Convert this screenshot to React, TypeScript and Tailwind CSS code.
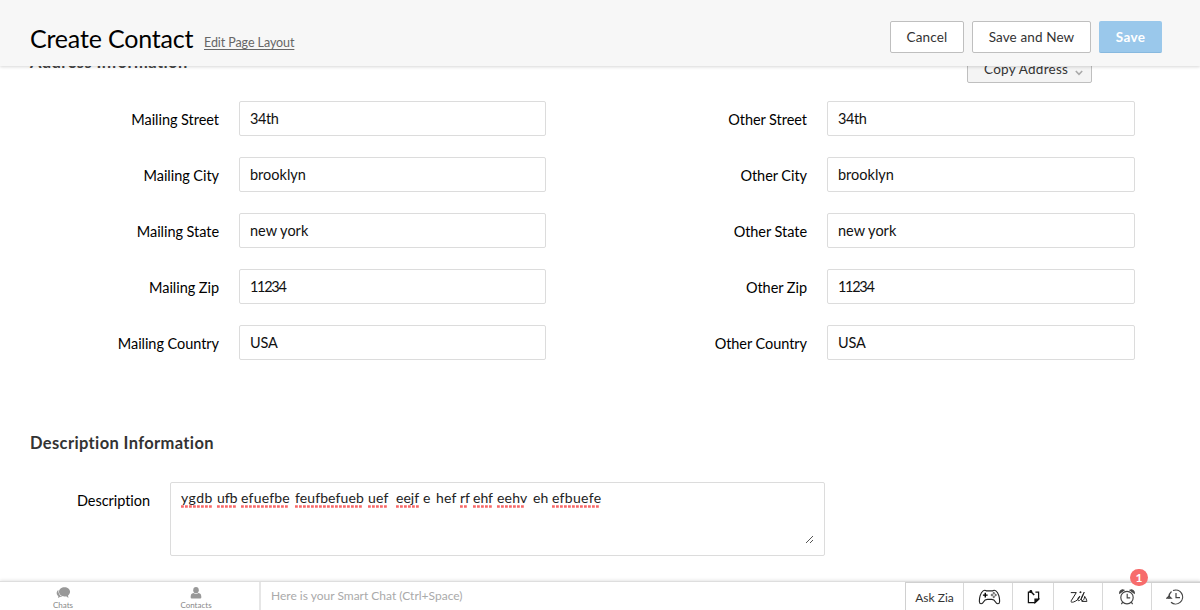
import React from "react";

type FieldProps = { label: string; value: string; spacing: string };

const leftFields: FieldProps[] = [
  { label: "Mailing Street", value: "34th", spacing: "tracking-[-0.4px]" },
  { label: "Mailing City", value: "brooklyn", spacing: "tracking-[0px]" },
  { label: "Mailing State", value: "new york", spacing: "tracking-[0px]" },
  { label: "Mailing Zip", value: "11234", spacing: "tracking-[-1.3px]" },
  { label: "Mailing Country", value: "USA", spacing: "tracking-[-0.2px]" },
];

const rightFields: FieldProps[] = leftFields.map((f) => ({
  ...f,
  label: f.label.replace("Mailing", "Other"),
}));

const words: { text: string; width: string; marked: boolean; line: string }[] = [
  { text: "ygdb", width: "w-[36px] tracking-[0.5px]", marked: true, line: "w-[32px]" },
  { text: "ufb", width: "w-[24px]", marked: true, line: "w-[20px]" },
  { text: "efuefbe", width: "w-[54px] tracking-[0.2px]", marked: true, line: "w-[48px]" },
  { text: "feufbefueb", width: "w-[73px] tracking-[0.1px]", marked: true, line: "w-[68px]" },
  { text: "uef", width: "w-[28px] tracking-[0.2px]", marked: true, line: "w-[20px]" },
  { text: "eejf", width: "w-[27px]", marked: true, line: "w-[24px]" },
  { text: "e", width: "w-[13px]", marked: false, line: "" },
  { text: "hef", width: "w-[24px] tracking-[0.2px]", marked: false, line: "" },
  { text: "rf", width: "w-[13px]", marked: true, line: "w-[8px]" },
  { text: "ehf", width: "w-[24px]", marked: true, line: "w-[20px]" },
  { text: "eehv", width: "w-[36px] tracking-[0.2px]", marked: true, line: "w-[28px]" },
  { text: "eh", width: "w-[19px]", marked: false, line: "" },
  { text: "efbuefe", width: "w-[52px] tracking-[0.3px]", marked: true, line: "w-[48px]" },
];

function Field({ label, value, spacing }: FieldProps) {
  return (
    <div className="flex h-[35px] items-center">
      <label className="w-[189px] pt-[2px] text-right text-[14.5px] leading-5 tracking-[-0.05px] text-black">{label}</label>
      <div className="ml-5 flex h-[35px] flex-1 items-center rounded-[2px] border border-[#dcdcdc] bg-white pl-[10px] pt-px">
        <span className={`text-[14.5px] leading-5 text-[#111] ${spacing}`}>{value}</span>
      </div>
    </div>
  );
}

function Squiggle({ width }: { width: string }) {
  return (
    <svg className={`absolute left-0 top-[17px] h-[3px] ${width}`} aria-hidden="true">
      <line x1="0" y1="1.5" x2="100%" y2="1.5" stroke="#f76868" strokeWidth="2.4" strokeDasharray="2.8 1.2" />
    </svg>
  );
}

export default function App() {
  return (
    <div className="flex h-[610px] w-[1200px] flex-col overflow-hidden bg-white font-['Lato','Liberation_Sans',sans-serif]">
      <header className="z-10 flex h-[66px] shrink-0 items-start bg-[#f7f7f7] pl-[30px] pr-[38px] shadow-[0_1px_3px_rgba(0,0,0,0.16)]">
        <h1 className="mt-[20px] w-[174px] whitespace-nowrap text-[25px] leading-9 tracking-[-0.18px] text-black">Create Contact</h1>
        <a className="mt-[34px] whitespace-nowrap text-[12.5px] leading-[18px] tracking-[-0.08px] text-[#666] underline underline-offset-2">Edit Page Layout</a>
        <div className="ml-auto mt-[21px] flex gap-2 text-[13.5px] text-[#333]">
          <button className="h-8 w-[74px] rounded-[2px] border border-[#bfbfbf] bg-white tracking-[0.15px]">Cancel</button>
          <button className="h-8 w-[119px] rounded-[2px] border border-[#bfbfbf] bg-white tracking-[0.12px]">Save and New</button>
          <button className="h-8 w-[63px] rounded-[2px] border-b border-[#87b9df] bg-[#9ac8eb] pt-px font-bold tracking-[0.3px] text-white">Save</button>
        </div>
      </header>

      <main className="min-h-0 flex-1 overflow-hidden pl-[30px]">
        <div className="-mt-[15px] flex h-8 justify-between pr-[108px]">
          <h2 className="text-[16.5px] font-bold leading-[22px] tracking-[0.42px] text-[#444]">Address Information</h2>
          <button className="flex h-8 w-[125px] items-center rounded-[2px] border border-[#bfbfbf] bg-[#f4f4f4] pl-4 pt-[5px] text-[13.5px] text-[#333]">
            <span className="w-[91px] text-left tracking-[0.25px]">Copy Address</span>
            <svg width="8" height="6" viewBox="0 0 8 6" className="mt-[6px]" fill="none" stroke="#aaa" strokeWidth="1.6">
              <path d="M.8 1 4 4.3 7.2 1" />
            </svg>
          </button>
        </div>
        <div className="mt-[18px] flex">
          <div className="flex w-[516px] flex-col gap-[21px]">
            {leftFields.map((f) => <Field key={f.label} {...f} />)}
          </div>
          <div className="ml-[72px] flex w-[517px] flex-col gap-[21px]">
            {rightFields.map((f) => <Field key={f.label} {...f} />)}
          </div>
        </div>
        <h2 className="mt-[72px] text-[16.5px] font-bold leading-[22px] tracking-[0.36px] text-[#333]">Description Information</h2>
        <div className="mt-[28px] flex">
          <label className="w-[120px] pt-[9px] text-right text-[14.5px] leading-5 tracking-[-0.05px]">Description</label>
          <div className="ml-5 flex h-[74px] w-[655px] items-start rounded-[2px] border border-[#dcdcdc] pl-[10px] pr-[10px] pt-[5px]">
            <p className="flex whitespace-pre text-[14px] leading-5 text-[#222]">
              {words.map((w, i) => (
                <span key={i} className={`relative ${w.width}`}>
                  {w.text}
                  {w.marked && <Squiggle width={w.line} />}
                </span>
              ))}
            </p>
            <svg className="ml-auto mt-[46px]" width="10" height="10" viewBox="0 0 10 10" stroke="#555" strokeWidth="1">
              <path d="M2 9 9 2M6 9 9 6" />
            </svg>
          </div>
        </div>
      </main>

      <footer className="z-10 flex h-[29px] shrink-0 border-t border-[#dedede] bg-white shadow-[0_-1px_3px_rgba(0,0,0,0.1)]">
        <div className="flex w-[261px] border-r-2 border-[#e6e6e6] text-[8px] leading-[10px] text-[#888]">
          <div className="flex w-[126px] shrink-0 flex-col items-center pt-[5px]">
            <svg width="15" height="13" viewBox="0 0 15 13" fill="#999">
              <path d="M8.6.2c3.3 0 6 2.2 6 5 0 1.6-.9 3-2.2 4l.5 2.6-2.6-1.7c-.5.1-1.1.2-1.7.2-3.3 0-6-2.3-6-5.1s2.7-5 6-5Z" />
              <path d="M2 3.2C.8 4 .1 5.2.1 6.5c0 1.4.7 2.6 1.8 3.4L1.6 12l2.5-1.4c.8.3 1.8.4 2.8.2C3.8 10 1.6 7 2 3.2Z" />
            </svg>
            <span className="mt-px">Chats</span>
          </div>
          <div className="flex w-[140px] shrink-0 flex-col items-center pt-[5px]">
            <svg width="12" height="13" viewBox="0 0 12 13" fill="#999">
              <ellipse cx="6" cy="3.5" rx="3" ry="3.4" />
              <path d="M3.4 6.5Q6 8.8 8.6 6.5C11.2 7 11.8 8.4 11.8 11.2Q11.8 12.5 10.6 12.5H1.4Q.2 12.5.2 11.2C.2 8.4.8 7 3.4 6.5Z" />
            </svg>
            <span className="mt-px">Contacts</span>
          </div>
        </div>
        <div className="w-[644px] pl-[10px] pt-[5px] text-[12px] leading-[18px] text-[#aaa]">Here is your Smart Chat (Ctrl+Space)</div>
        <div className="flex flex-1 border-l border-t border-[#d0d0d0]">
          <div className="flex w-[58px] items-center justify-center border-r border-[#d8d8d8] pt-[2px] text-[12px] text-[#333]">Ask Zia</div>
          <div className="flex w-[49px] items-center justify-center border-r border-[#d8d8d8] pl-[2px] pt-px">
            <svg width="23" height="16" viewBox="0 0 24 17" fill="none" stroke="#222" strokeWidth="1.2">
              <path d="M5.2 2Q7.2.7 8.6 2h6.8Q16.8.7 18.8 2C21.6 3.8 23 10 22.7 13.5c-.2 2.9-3.1 2.8-4.3.4C17.3 11.7 16.2 11 14.4 11H9.6c-1.8 0-2.9.7-4 2.9-1.2 2.4-4.1 2.5-4.3-.4C1 10 2.4 3.8 5.2 2Z" />
              <path d="M7.5 4v5M5 6.5h5" stroke="#000" strokeWidth="1.5" />
              <g strokeWidth=".8"><circle cx="16.5" cy="4.4" r=".8" /><circle cx="16.5" cy="8.4" r=".8" /><circle cx="14.5" cy="6.4" r=".8" /><circle cx="18.5" cy="6.4" r=".8" /></g>
            </svg>
          </div>
          <div className="flex w-[41px] items-center justify-center border-r border-[#d8d8d8]">
            <svg width="13" height="14" viewBox="0 0 13 14" fill="none" stroke="#111" strokeWidth="1.25">
              <path d="M3 2.2H1.4v10.4H8l3.6-3.4v-7H8.4" />
              <path d="M8 12.6V9.2h3.6Z" fill="#111" />
              <circle cx="3.8" cy="1.5" r=".9" fill="#111" />
              <path d="M4 1.7 7.2 5" strokeWidth="1.5" />
            </svg>
          </div>
          <div className="flex w-[49px] items-center justify-center border-r border-[#d8d8d8] pl-px pt-px">
            <svg width="18" height="14" viewBox="0 0 18 14" fill="none" stroke="#222" strokeWidth="1" strokeLinecap="round" strokeLinejoin="round">
              <path d="M1.2 2.6H6.3L1.2 10.8C.5 12.3 2 12.4 3.5 12 6.7 11 9.4 8.6 9.8 6.2C8 7.2 7.2 9.6 8.3 10.6 9.8 11.4 12.5 8 14 2.6" />
              <path d="M14 2.6C12.2 5.4 10.6 8.6 11.5 10.4c.9 1.2 2.9-.6 3.2-4 1.2 1.4 2 3.8 2.2 5H12" />
              <circle cx="10.3" cy="2.2" r=".5" fill="#222" />
            </svg>
          </div>
          <div className="relative flex w-[49px] items-center justify-center border-r border-[#d8d8d8]">
            <svg width="16" height="16" viewBox="0 0 16 16" fill="none" stroke="#444" strokeWidth="1.15">
              <circle cx="8" cy="8.6" r="6.2" />
              <path d="M8.2 4.8v4h3M3.7 13.1l-1.3 2M12.3 13.1l1.3 2" />
              <path d="M.7 4.2A3 3 0 0 1 5 1.2ZM15.3 4.2A3 3 0 0 0 11 1.2Z" fill="#444" />
            </svg>
            <span className="absolute left-[27px] top-[-14px] flex h-[17px] w-[18px] items-center justify-center rounded-full bg-[#f76c6c] text-[12px] font-bold text-white">1</span>
          </div>
          <div className="flex flex-1 items-center justify-center pr-[2px]">
            <svg width="18" height="16" viewBox="0 0 18 16" fill="none" stroke="#444" strokeWidth="1.2">
              <path d="M3 9.5V8A7 7 0 0 1 5.5 2.5M7 1.5A7 7 0 1 1 5 13.3" />
              <path d="M10 4v4.7h4M.8 9.2 3 7l2.2 2.2Z" />
            </svg>
          </div>
        </div>
      </footer>
    </div>
  );
}
